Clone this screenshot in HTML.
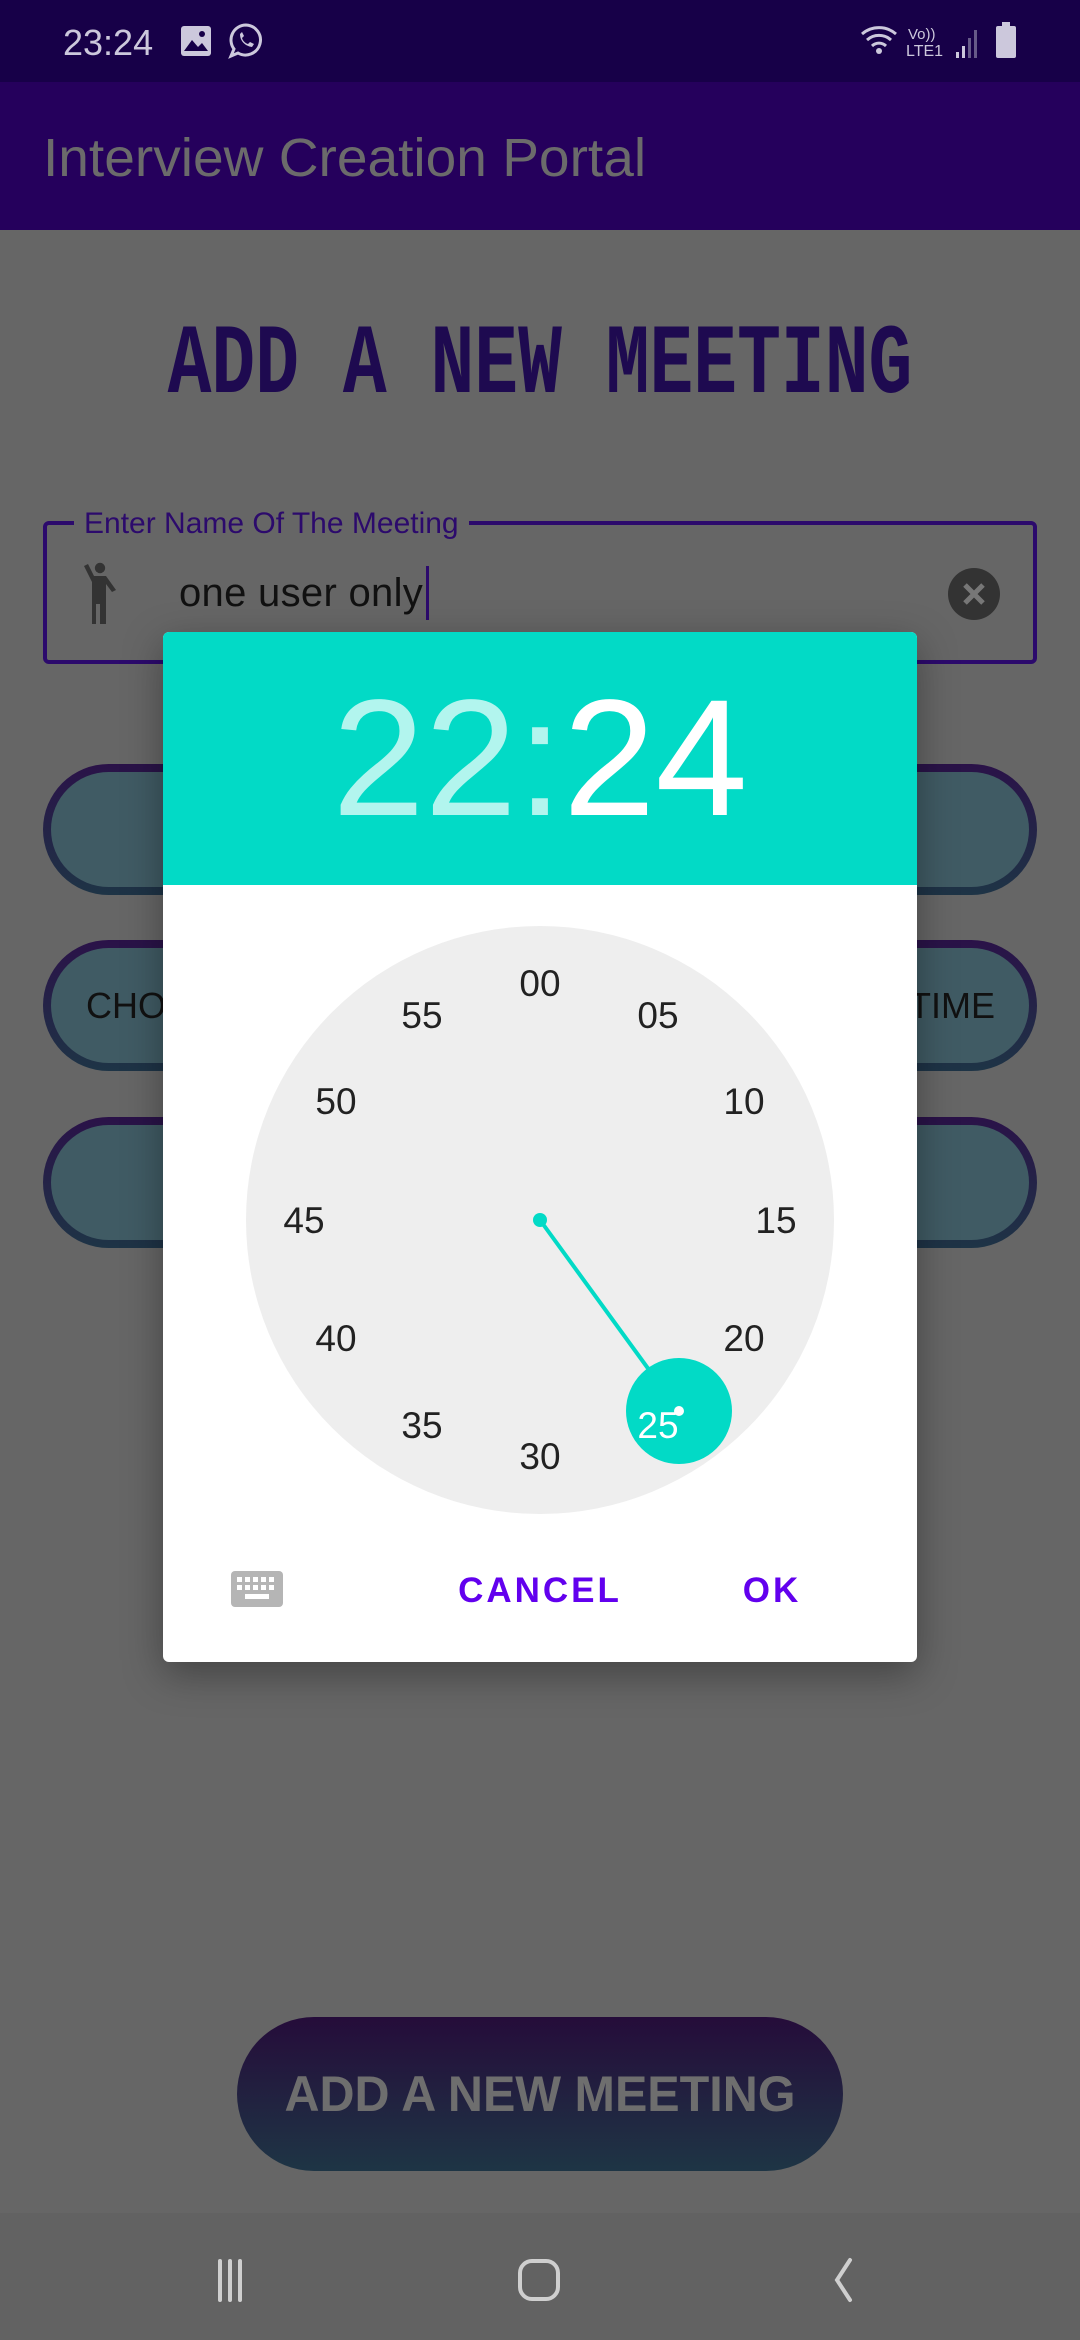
<!DOCTYPE html>
<html><head><meta charset="utf-8">
<style>
*{margin:0;padding:0;box-sizing:border-box}
body{width:1080px;height:2340px;position:relative;background:#666;font-family:"Liberation Sans",sans-serif;overflow:hidden}
.abs{position:absolute}
.status{left:0;top:0;width:1080px;height:82px;background:#170048}
.appbar{left:0;top:82px;width:1080px;height:148px;background:#25005c}
.pill{position:absolute;left:43px;width:994px;height:131px;border-radius:66px;padding:8px;background:linear-gradient(#2a1248,#1e3446)}
.pill div{width:100%;height:100%;border-radius:58px;background:#405b64;color:#111;font-size:36px;line-height:115px}
</style></head><body>
<div class="abs status"></div>
<div class="abs" style="left:63px;top:22px;font-size:36px;color:#ccc8dc">23:24</div>
<svg class="abs" style="left:180px;top:25px" width="32" height="32" viewBox="0 0 32 32"><rect x="1" y="1" width="30" height="30" rx="3" fill="#ccc8dc"/><path d="M4 26 L12 15 L18 22 L22 18 L28 26Z" fill="#170048"/><circle cx="22" cy="9" r="3" fill="#170048"/></svg>
<svg class="abs" style="left:228px;top:22px" width="36" height="38" viewBox="0 0 36 38"><path d="M18 3a15 15 0 1 1-8 28l-7 3 3-7A15 15 0 0 1 18 3z" fill="none" stroke="#ccc8dc" stroke-width="3"/><path d="M12 12c0 7 5 12 12 13l2-3-4-2-2 2c-3-1-5-3-6-6l2-2-2-4z" fill="#ccc8dc"/></svg>
<svg class="abs" style="left:860px;top:22px" width="140" height="40" viewBox="0 0 140 40"><path d="M2 12a26 26 0 0 1 34 0M7 18a18 18 0 0 1 24 0M12 24a10 10 0 0 1 14 0" stroke="#ccc8dc" stroke-width="3" fill="none"/><circle cx="19" cy="29" r="3" fill="#ccc8dc"/><text x="48" y="17" font-size="15" fill="#ccc8dc" font-family="Liberation Sans">Vo))</text><text x="46" y="34" font-size="16" fill="#ccc8dc" font-family="Liberation Sans">LTE1</text><rect x="96" y="30" width="3" height="6" fill="#ccc8dc"/><rect x="102" y="24" width="3" height="12" fill="#ccc8dc"/><rect x="108" y="16" width="3" height="20" fill="#665a88"/><rect x="114" y="8" width="3" height="28" fill="#665a88"/></svg>
<div class="abs" style="left:996px;top:26px;width:20px;height:32px;background:#ccc8dc;border-radius:2px"></div>
<div class="abs" style="left:1002px;top:22px;width:8px;height:5px;background:#ccc8dc"></div>
<div class="abs appbar"></div>
<div class="abs" style="left:43px;top:126px;font-size:54px;color:#6b6b6b;line-height:64px;transform:scaleX(1.02);transform-origin:left">Interview Creation Portal</div>
<div class="abs" style="left:0;width:1080px;top:326px;text-align:center;font-family:'Liberation Mono',monospace;font-weight:bold;font-size:73px;color:#1e0a50;transform:scaleY(1.36);line-height:80px">ADD A NEW MEETING</div>
<div class="abs" style="left:43px;top:521px;width:994px;height:143px;border:4px solid #2c0a6c;border-radius:6px"></div>
<div class="abs" style="left:74px;top:504px;background:#666;padding:0 10px;font-size:30px;color:#2c0a6c;line-height:40px">Enter Name Of The Meeting</div>
<svg class="abs" style="left:82px;top:562px" width="48" height="62" viewBox="0 0 24 31"><circle cx="9" cy="3" r="2.6" fill="#333"/><path d="M1 2l2-1 3 6h6l5 7-2 1-3-4v20h-3V21H7v10H5V10z" fill="#333"/></svg>
<div class="abs" style="left:179px;top:570px;font-size:40px;color:#111;line-height:46px;letter-spacing:0.3px">one user only</div>
<div class="abs" style="left:426px;top:566px;width:3px;height:54px;background:#2c0a6c"></div>
<div class="abs" style="left:948px;top:568px;width:52px;height:52px;border-radius:50%;background:#333"></div>
<svg class="abs" style="left:948px;top:568px" width="52" height="52"><path d="M17 17L35 35M35 17L17 35" stroke="#777" stroke-width="5"/></svg>
<div class="pill" style="top:764px"><div></div></div>
<div class="pill" style="top:940px"><div style="padding-left:35px">CHO<span style="float:right;padding-right:34px">TIME</span></div></div>
<div class="pill" style="top:1117px"><div></div></div>
<div class="abs" style="left:237px;top:2017px;width:606px;height:154px;border-radius:77px/77px;background:linear-gradient(#250c3a,#1e3545)"></div>
<div class="abs" style="left:237px;top:2017px;width:606px;text-align:center;color:#6e6e6e;font-size:50px;font-weight:bold;line-height:154px;transform:scaleX(0.97)">ADD A NEW MEETING</div>
<div class="abs" style="left:0;top:2213px;width:1080px;height:127px;background:#626262"></div>
<svg class="abs" style="left:200px;top:2250px" width="700" height="60"><g stroke="#cfcfcf" stroke-width="4" fill="none" stroke-linecap="round"><path d="M20 11V50M30 11V50M40 11V50"/><rect x="320" y="11" width="38" height="38" rx="12"/><path d="M650 10L637 30L650 50"/></g></svg>
<div class="abs" style="left:163px;top:632px;width:754px;height:1030px;background:#fff;border-radius:6px;box-shadow:0 12px 40px rgba(0,0,0,.35);overflow:hidden">
<div style="height:253px;background:#02dac6;text-align:center;font-size:166px;line-height:253px;color:#fff"><span style="color:#b2f5ee">22:</span>24</div>
</div>
<svg class="abs" style="left:0;top:0" width="1080" height="2340">
<circle cx="540" cy="1220" r="294" fill="#eeeeee"/>
<line x1="540" y1="1220" x2="679" y2="1411" stroke="#02dac6" stroke-width="4"/>
<circle cx="540" cy="1220" r="7" fill="#02dac6"/>
<circle cx="679" cy="1411" r="53" fill="#02dac6"/>
<circle cx="679" cy="1411" r="5" fill="#fff"/>
<g font-family="Liberation Sans" font-size="37" fill="#222" text-anchor="middle">
<text x="540" y="996">00</text>
<text x="658" y="1028">05</text>
<text x="744" y="1114">10</text>
<text x="776" y="1233">15</text>
<text x="744" y="1351">20</text>
<text x="658" y="1438" fill="#fff">25</text>
<text x="540" y="1469">30</text>
<text x="422" y="1438">35</text>
<text x="336" y="1351">40</text>
<text x="304" y="1233">45</text>
<text x="336" y="1114">50</text>
<text x="422" y="1028">55</text>
</g>
<rect x="231" y="1571" width="52" height="36" rx="4" fill="#b5b5b5"/>
<g fill="#fff"><rect x="237" y="1577" width="5" height="5"/><rect x="245" y="1577" width="5" height="5"/><rect x="253" y="1577" width="5" height="5"/><rect x="261" y="1577" width="5" height="5"/><rect x="269" y="1577" width="5" height="5"/><rect x="237" y="1585" width="5" height="5"/><rect x="245" y="1585" width="5" height="5"/><rect x="253" y="1585" width="5" height="5"/><rect x="261" y="1585" width="5" height="5"/><rect x="269" y="1585" width="5" height="5"/><rect x="245" y="1594" width="24" height="5"/></g>
<g font-family="Liberation Sans" font-size="35" font-weight="bold" fill="#6200ee" text-anchor="middle" letter-spacing="3">
<text x="540" y="1602">CANCEL</text>
<text x="772" y="1602">OK</text>
</g>
</svg>
</body></html>
